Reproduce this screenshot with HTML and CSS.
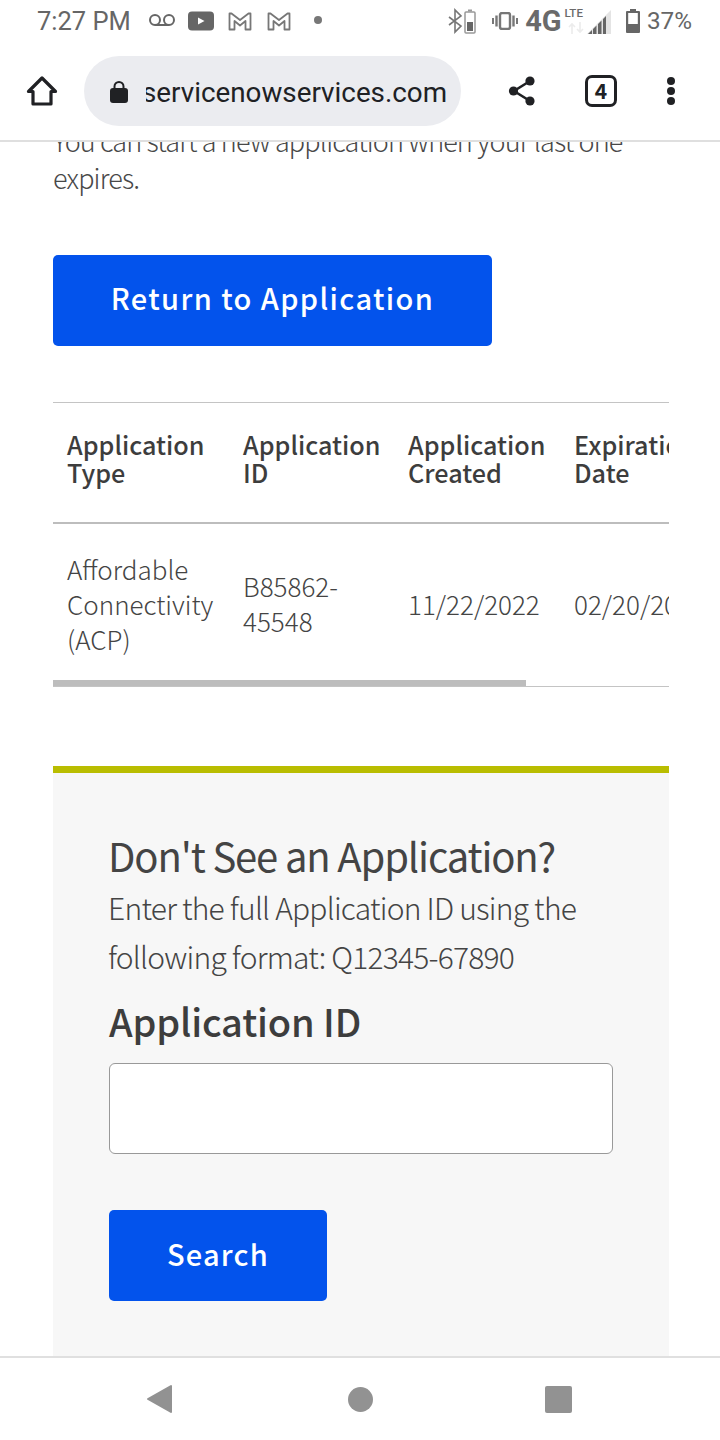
FILE: index.html
```html
<!DOCTYPE html>
<html lang="en">
<head>
<meta charset="utf-8">
<title>Application</title>
<link rel="stylesheet" href="styles.css">
</head>
<body>
<div class="phone">
  <header class="status">
    <div class="status-left">
      <span class="time">7:27 PM</span>
      <svg class="vm" viewBox="0 0 26 12"><circle cx="6" cy="6" r="5" fill="none" stroke="#666" stroke-width="2"/><circle cx="20" cy="6" r="5" fill="none" stroke="#666" stroke-width="2"/><path d="M6 11h14" stroke="#666" stroke-width="2"/></svg>
      <svg class="yt" viewBox="0 0 26 20"><rect width="26" height="19" y=".5" rx="4" fill="#666"/><path d="M10 6.500l6.500 3.500-6.500 3.500z" fill="#fff"/></svg>
      <svg class="gm" viewBox="0 0 24 20"><path d="M1.500 18.500V2.500h2l8.500 6.500 8.500-6.500h2v16h-5V10L12 14.500 6.500 10v8.500z" fill="none" stroke="#777" stroke-width="1.800" stroke-linejoin="round"/></svg>
      <svg class="gm" viewBox="0 0 24 20"><path d="M1.500 18.500V2.500h2l8.500 6.500 8.500-6.500h2v16h-5V10L12 14.500 6.500 10v8.500z" fill="none" stroke="#777" stroke-width="1.800" stroke-linejoin="round"/></svg>
      <span class="dot"></span>
    </div>
    <div class="status-right">
      <svg class="bt" viewBox="0 0 32 26"><path d="M3 9l12 9-6 6V2l6 6L3 17" fill="none" stroke="#777" stroke-width="1.600"/><rect x="19" y="4" width="10" height="21" rx="1" fill="none" stroke="#999" stroke-width="1.500"/><rect x="21" y="14" width="6" height="9" fill="#666"/><rect x="22" y="1.500" width="4" height="2" fill="#999"/></svg>
      <svg class="vib" viewBox="0 0 26 18"><rect x="8" y="1" width="10" height="16" rx="2" fill="none" stroke="#777" stroke-width="2.400"/><path d="M4.500 3.500v11M21.500 3.500v11" stroke="#777" stroke-width="2.400"/><path d="M1 6v6M25 6v6" stroke="#777" stroke-width="2"/></svg>
      <span class="net">4G<sup class="lte">LTE</sup>
        <svg class="arrows" viewBox="0 0 18 12"><path d="M5 12V2M2 5l3-3 3 3M13 0v10M10 7l3 3 3-3" fill="none" stroke="#ececec" stroke-width="1.600"/></svg>
      </span>
      <svg class="sig" viewBox="0 0 24 24"><path d="M0 24 24 0v24z" fill="#e4e4e4"/><path d="M1 24l4-4v4zM6 24v-5l3.500-3.500V24zM11 24V14l3.500-3.500V24zM16 24V9l3-3v18z" fill="#666"/></svg>
      <svg class="bat" viewBox="0 0 14 24"><path d="M4 0h6v2h3a1 1 0 0 1 1 1v20a1 1 0 0 1-1 1H1a1 1 0 0 1-1-1V3a1 1 0 0 1 1-1h3z" fill="#666"/><rect x="2.200" y="4" width="9.600" height="11" fill="#fff"/></svg>
      <span class="pct">37%</span>
    </div>
  </header>

  <nav class="toolbar">
    <svg class="home" viewBox="0 0 32 32"><path d="M16 3 2.500 16.500H7V29h18V16.500h4.500z" fill="none" stroke="#202124" stroke-width="3.200" stroke-linejoin="round"/></svg>
    <div class="omnibox">
      <svg class="lock" viewBox="0 0 18 24"><path d="M4.500 9V6.500a4.500 4.500 0 0 1 9 0V9" fill="none" stroke="#202124" stroke-width="2"/><rect y="8" width="18" height="15" rx="3" fill="#202124"/></svg>
      <div class="url"><span>servicenowservices.com</span></div>
    </div>
    <svg class="share" viewBox="0 0 28 30"><path d="M22 5 6 15l16 10" fill="none" stroke="#202124" stroke-width="2.600"/><circle cx="22" cy="5" r="4.600" fill="#202124"/><circle cx="5.500" cy="15" r="4.600" fill="#202124"/><circle cx="22" cy="25" r="4.600" fill="#202124"/></svg>
    <div class="tabs">4</div>
    <div class="menu"><i></i><i></i><i></i></div>
  </nav>

  <main class="content">
    <div class="page">
      <p class="intro">You can start a new application when your last one expires.</p>
      <a class="btn btn-wide">Return to Application</a>
      <div class="table-wrap">
        <div class="table-scroll">
          <table>
            <thead>
              <tr><th class="c1">Application Type</th><th class="c2">Application ID</th><th class="c3">Application Created</th><th class="c4">Expiration Date</th></tr>
            </thead>
            <tbody>
              <tr><td>Affordable Connectivity (ACP)</td><td>B85862-<br>45548</td><td>11/22/2022</td><td>02/20/2023</td></tr>
            </tbody>
          </table>
        </div>
        <div class="scrollbar"></div>
      </div>
      <section class="panel">
        <h2>Don't See an Application?</h2>
        <p class="hint">Enter the full Application ID using the following format: Q12345-67890</p>
        <label class="field-label" for="appid">Application ID</label>
        <input class="field" id="appid" type="text">
        <a class="btn btn-small">Search</a>
      </section>
    </div>
  </main>

  <footer class="navbar">
    <svg class="nav-back" viewBox="0 0 26 30"><path d="M25 2v26L2 15z" fill="#929292" stroke="#929292" stroke-width="2" stroke-linejoin="round"/></svg>
    <span class="nav-home"></span>
    <span class="nav-recent"></span>
  </footer>
</div>
</body>
</html>
```

FILE: styles.css
```css
* { box-sizing: border-box; }
html, body { margin: 0; padding: 0; background: #fff; }
.phone { width: 720px; height: 1440px; display: flex; flex-direction: column; overflow: hidden; font-family: "Noto Sans CJK SC", "Source Sans Pro", sans-serif; color: #3d3d3d; }

.status { height: 40px; flex: none; display: flex; justify-content: space-between; align-items: center; padding: 2px 28px 0 37px; font-family: Roboto, sans-serif; color: #666; }
.status-left, .status-right { display: flex; align-items: center; }
.time { font-size: 25.500px; line-height: 40px; margin-right: 18px; }
.vm { width: 26px; height: 12px; flex: none; margin-top: -2px; }
.yt { width: 26px; height: 20px; margin-left: 13px; flex: none; }
.gm { width: 24px; height: 20px; margin-left: 14px; flex: none; }
.gm + .gm { margin-left: 15px; }
.dot { width: 8px; height: 8px; border-radius: 50%; background: #777; margin-left: 23px; margin-top: -2px; }
.bt { width: 32px; height: 26px; }
.vib { width: 26px; height: 18px; margin-left: 14px; }
.net { position: relative; font-size: 29px; font-weight: 700; line-height: 40px; margin-left: 7px; color: #6a6a6a; display: flex; }
.lte { font-size: 11.500px; font-weight: 500; line-height: 14px; margin-top: 5px; margin-left: 3px; }
.arrows { position: absolute; left: 42px; top: 21px; width: 18px; height: 12px; }
.sig { width: 24px; height: 24px; margin-left: 4px; margin-top: 2px; }
.bat { width: 14px; height: 24px; margin-left: 15px; }
.pct { font-size: 24.300px; line-height: 40px; margin-left: 7px; }

.toolbar { height: 102px; flex: none; display: flex; align-items: flex-start; border-bottom: 2px solid #dfdfdf; padding: 16px 0 0 26px; background: #fff; position: relative; z-index: 2; }
.home { width: 32px; height: 32px; margin-top: 19px; flex: none; }
.omnibox { width: 377px; height: 70px; margin-left: 26px; border-radius: 35px; background: #ebecf0; display: flex; align-items: center; padding-left: 26px; flex: none; }
.lock { width: 18px; height: 24px; flex: none; margin-top: 2px; }
.url { width: 302px; margin-left: 18px; padding-top: 3px; overflow: hidden; font-family: Roboto, sans-serif; font-size: 27.800px; line-height: 36px; color: #202124; white-space: nowrap; }
.url span { display: block; margin-left: -4px; }
.share { width: 28px; height: 30px; margin: 20px 0 0 47px; flex: none; }
.tabs { width: 32px; height: 32px; margin: 19px 0 0 49px; border: 3px solid #202124; border-radius: 7px; font: 700 21px/25px "Noto Sans CJK SC", sans-serif; text-align: center; color: #202124; flex: none; }
.menu { display: flex; flex-direction: column; gap: 2px; margin: 21px 0 0 50px; }
.menu i { width: 8px; height: 8px; border-radius: 50%; background: #202124; display: block; }

.content { flex: 1; overflow: hidden; position: relative; }
.page { margin-top: -20px; padding: 0 51px 0 53px; }
.intro { margin: 0; font-size: 27px; font-weight: 300; line-height: 37px; width: 600px; letter-spacing: -.85px; color: #484848; }
.btn { display: flex; align-items: center; justify-content: center; height: 91px; border-radius: 5px; background: #0353ec; color: #fff; font-weight: 500; }
.btn-wide { width: 439px; margin-top: 59px; padding-bottom: 7px; font-size: 29px; letter-spacing: 1.400px; }
.btn-small { width: 218px; margin-top: 56px; padding-bottom: 6px; font-size: 29px; letter-spacing: 1.200px; }

.table-wrap { margin-top: 56px; position: relative; border-top: 1px solid #c4c4c4; border-bottom: 1px solid #c4c4c4; width: 616px; }
.table-scroll { overflow: hidden; height: 283px; }
table { border-collapse: collapse; width: 680px; table-layout: fixed; }
th { height: 120px; padding: 0 0 9px 14px; font-size: 25.200px; font-weight: 500; line-height: 28px; text-align: left; vertical-align: middle; border-bottom: 2px solid #bdbdbd; color: #3d3d3d; }
td { height: 162px; padding: 0 0 3px 14px; font-size: 26px; font-weight: 300; line-height: 35px; vertical-align: middle; color: #444; }
.c1 { width: 176px; }
.c2 { width: 165px; }
.c3 { width: 166px; }
.c4 { width: 173px; }
.scrollbar { position: absolute; left: 0; bottom: 0; width: 473px; height: 6px; background: #bdbdbd; }

.panel { margin-top: 79px; width: 616px; height: 700px; border-top: 7px solid #b9bd00; background: #f7f7f7; padding: 54px 56px 0; }
.panel h2 { margin: 0 0 0 -1px; font-size: 40px; font-weight: 400; line-height: 56px; letter-spacing: -1.150px; color: #444; }
.hint { margin: 0 0 0 -1px; font-size: 30px; font-weight: 300; line-height: 49px; width: 490px; letter-spacing: -.78px; color: #444; }
.field-label { display: block; margin-top: 15px; font-size: 38px; font-weight: 500; line-height: 50px; letter-spacing: -.15px; }
.field { display: block; width: 504px; height: 91px; margin-top: 17px; border: 1px solid #999; border-radius: 6px; background: #fff; }

.navbar { height: 84px; flex: none; border-top: 2px solid #e0e0e0; background: #fff; display: flex; align-items: center; position: relative; z-index: 2; padding: 0 0 0 146px; }
.nav-back { width: 26px; height: 30px; flex: none; }
.nav-home { width: 25px; height: 25px; border-radius: 50%; background: #929292; margin-left: 176px; flex: none; }
.nav-recent { width: 27px; height: 27px; border-radius: 2px; background: #929292; margin-left: 172px; flex: none; }
```
